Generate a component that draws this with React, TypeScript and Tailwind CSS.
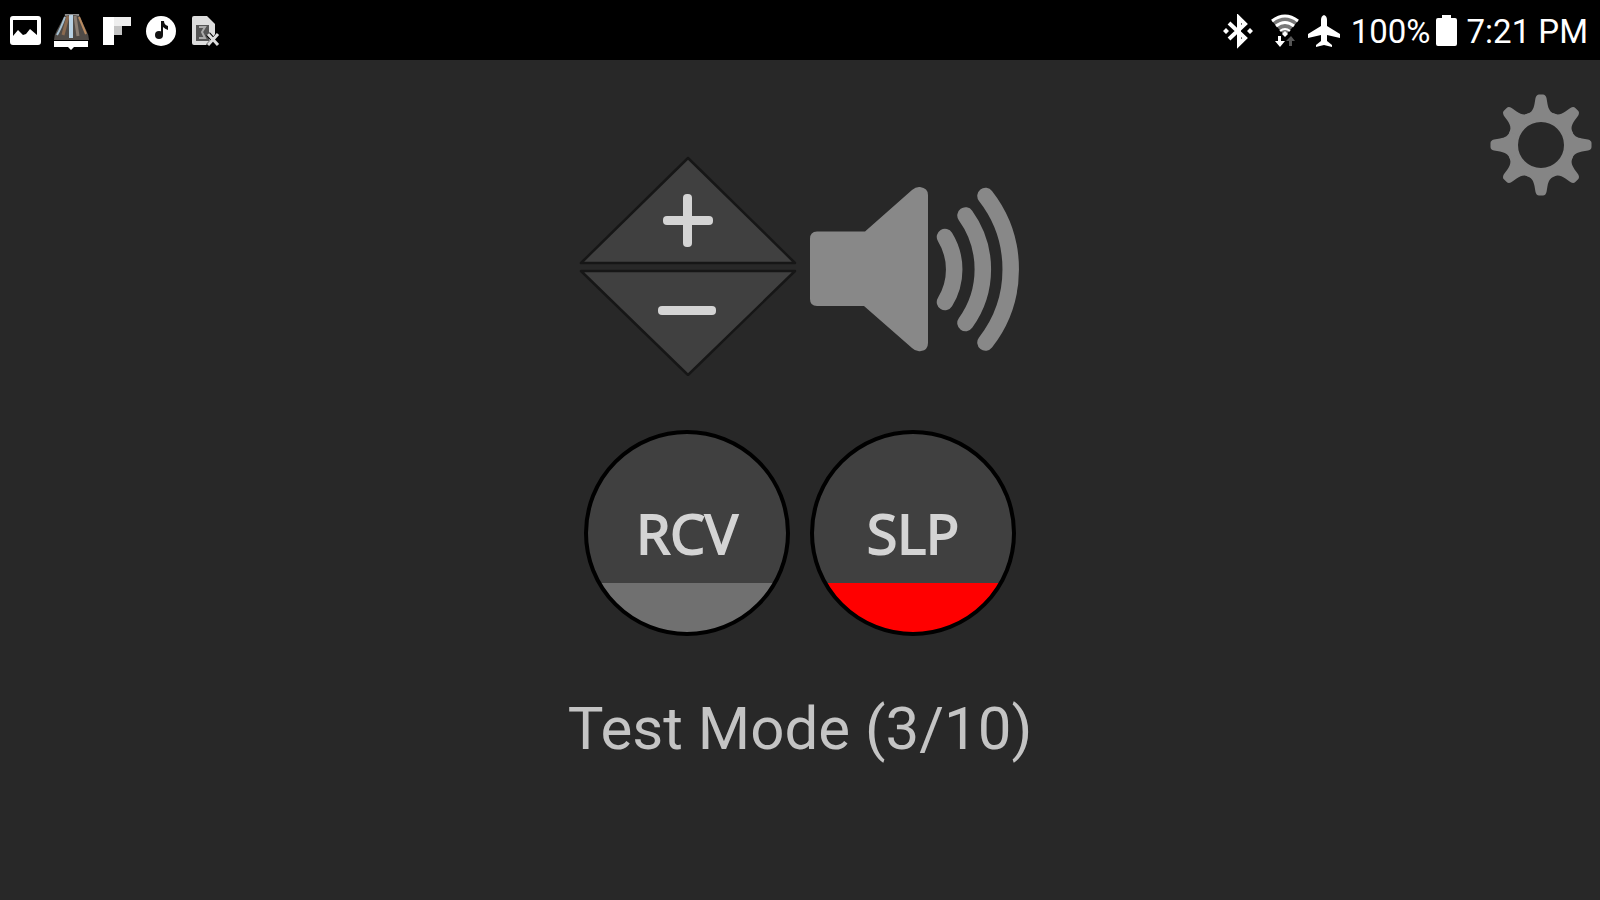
import type { ReactNode } from "react";

const TEETH = [0, 45, 90, 135, 180, 225, 270, 315];

function PictureIcon() {
  return (
    <svg className="w-8 h-9" viewBox="0 0 32 36" fill="#fff">
      <path
        fillRule="evenodd"
        d="M4 2h25a3 3 0 0 1 3 3v23a3 3 0 0 1-3 3H4a3 3 0 0 1-3-3V5a3 3 0 0 1 3-3zM4 6v16l5-6 5 5 3-1 4-5 7 6V6z"
      />
    </svg>
  );
}

function LighthouseIcon() {
  return (
    <svg className="w-9 h-9" viewBox="0 0 36 36">
      <path d="M11 1q7-3 14 0l7 15q3 5 3 10H0q0-5 3-10z" fill="#504b47" />
      <path d="M11 3Q7 14 3 21" stroke="#a5bfd0" strokeWidth="2" fill="none" />
      <path d="M14 2L9 21" stroke="#8a6a50" strokeWidth="3" />
      <path d="M17 1V24" stroke="#b9d2e4" strokeWidth="4" />
      <path d="M21 2L24 22" stroke="#8a7d72" strokeWidth="3" />
      <path d="M25 3L32 20" stroke="#b88a60" strokeWidth="2" />
      <path d="M11 1q7-2 14 0" stroke="#8f8f8f" strokeWidth="2" fill="none" />
      <path d="M0 27h34v6H20l-3 3-3-3H0z" fill="#fff" />
    </svg>
  );
}

function FlipboardIcon() {
  return (
    <svg className="w-[30px] h-9" viewBox="0 0 30 36">
      <path d="M0 3h11v28H0z" fill="#fff" />
      <path d="M11 3h17v9H11z" fill="#eee" />
      <path d="M11 12h8v9h-8z" fill="#c4c4c4" />
    </svg>
  );
}

function MusicIcon() {
  return (
    <svg className="w-8 h-9" viewBox="0 0 32 36">
      <circle cx="15" cy="17" r="15" fill="#fff" />
      <circle cx="13" cy="21" r="4" fill="#111" />
      <path d="M15 7h3q0 4 4 5v4q-3-1-5-3v8h-2z" fill="#111" />
    </svg>
  );
}

function FileErrorIcon() {
  return (
    <svg className="w-[30px] h-9" viewBox="0 0 30 36">
      <path d="M3 2h13l8 8v10l-5 11H3q-2 0-2-2V4q0-2 2-2z" fill="#ddd" />
      <path d="M5 11h13v16H5z" fill="#555" />
      <path d="M8 13h6l-3 5 3 6H8" fill="none" stroke="#aaa" strokeWidth="2" />
      <path d="M17 20l11 12M28 20L17 32" stroke="#000" strokeWidth="5" />
      <path d="M17 20l10 11M27 20L17 31" stroke="#ddd" strokeWidth="3" />
    </svg>
  );
}

function BluetoothIcon() {
  return (
    <svg className="w-8 h-9" viewBox="0 0 32 36" fill="none" stroke="#fff" strokeWidth="4">
      <path d="M6 9l16 15-6 6V4l6 6L6 25" />
      <path d="M0 17l3-3 3 3-3 3zM24 17l3-3 3 3-3 3z" fill="#fff" stroke="none" />
    </svg>
  );
}

function WifiIcon() {
  return (
    <svg className="w-7 h-9" viewBox="0 0 28 36" fill="none">
      <path d="M1 7q13-12 26 0L14 22z" fill="#777" />
      <path d="M1 7q13-10 26 0" stroke="#fff" strokeWidth="3" />
      <path d="M5 12q9-7 18 0" stroke="#fff" strokeWidth="3" />
      <path d="M9 17q5-4 10 0" stroke="#fff" strokeWidth="2" />
      <path d="M14 17l3 3-3 3-3-3z" fill="#fff" />
      <path d="M7 22h3v5h4l-5 6-5-6h3z" fill="#fff" />
      <path d="M18 32v-5h-3l5-5 4 5h-3v5z" fill="#555" />
    </svg>
  );
}

function AirplaneIcon() {
  return (
    <svg className="w-[34px] h-9" viewBox="0 0 34 36" fill="#fff">
      <path d="M17 1q3 1 3 5v6l13 8v4l-13-3v6l5 4v2l-8-2-8 2v-2l5-4v-6L1 24v-4l13-8V6q0-4 3-5z" />
    </svg>
  );
}

function BatteryIcon() {
  return (
    <svg className="w-6 h-9" viewBox="0 0 24 36" fill="#fff">
      <path d="M7 1h9v3h4q2 0 2 2v24q0 2-2 2H3q-2 0-2-2V6q0-2 2-2h4z" />
    </svg>
  );
}

function StatusBar() {
  return (
    <header className="h-[60px] bg-black flex items-center justify-between pt-1 pl-[9px] pr-3 text-white text-[33px] leading-9">
      <div className="flex items-center gap-[13px]">
        <PictureIcon />
        <LighthouseIcon />
        <FlipboardIcon />
        <MusicIcon />
        <FileErrorIcon />
      </div>
      <div className="flex items-center">
        <div className="flex items-center mr-[10px]">
          <BluetoothIcon />
          <span className="ml-4 mr-2">
            <WifiIcon />
          </span>
          <AirplaneIcon />
        </div>
        <span>100%</span>
        <span className="ml-1 mr-2">
          <BatteryIcon />
        </span>
        <time>7:21 PM</time>
      </div>
    </header>
  );
}

function GearIcon() {
  return (
    <svg className="w-[102px] h-[102px]" viewBox="-51 -51 102 102" fill="#858585">
      <circle r="28.500" fill="none" stroke="#858585" strokeWidth="11" />
      {TEETH.map((a) => (
        <path
          key={a}
          transform={`rotate(${a})`}
          d="M-13-31.4C-9-33-7.500-36-6.500-41L-5.500-47Q-4.500-50.500-2-50.500H2Q4.500-50.500 5.500-47L6.500-41C7.500-36 9-33 13-31.400L10-24H-10Z"
        />
      ))}
    </svg>
  );
}

function VolumeButtons() {
  return (
    <div className="flex flex-col">
      <button aria-label="Volume up">
        <svg className="w-[220px] h-[110px]" viewBox="0 0 220 110">
          <path d="M110 2L3 107H217Z" fill="#404040" stroke="#161616" strokeWidth="2.500" strokeLinejoin="round" />
          <rect x="85" y="60" width="50" height="9" rx="4" fill="#d4d4d4" />
          <rect x="105" y="38" width="9" height="53" rx="4" fill="#d4d4d4" />
        </svg>
      </button>
      <button aria-label="Volume down">
        <svg className="w-[220px] h-[110px]" viewBox="0 0 220 110">
          <path d="M110 109L3 5H217Z" fill="#404040" stroke="#161616" strokeWidth="2.500" strokeLinejoin="round" />
          <rect x="80" y="40" width="58" height="9" rx="4" fill="#d4d4d4" />
        </svg>
      </button>
    </div>
  );
}

function SpeakerIcon() {
  return (
    <svg className="w-[218px] h-[220px]" viewBox="0 0 218 220" fill="none" stroke="#888" strokeWidth="16.500" strokeLinecap="round">
      <path
        d="M13 75.500H61L108 34Q112 30.500 116 31Q124 32 124 39V187Q124 194 117 195Q112 196 108 192L60 150H13Q6 150 6 143V83Q6 75.500 13 75.500Z"
        fill="#888"
        stroke="none"
      />
      <path d="M141 81A62 62 0 0 1 141 146" />
      <path d="M161.500 59.500A92 92 0 0 1 161.500 167" />
      <path d="M181.500 40A119 119 0 0 1 181.500 186.500" />
    </svg>
  );
}

function RoundButton({ on, children }: { on?: boolean; children: ReactNode }) {
  const fill = on
    ? "bg-[linear-gradient(to_top,#ff0000_49px,#404040_49px)]"
    : "bg-[linear-gradient(to_top,#707070_49px,#404040_49px)]";
  return (
    <button
      aria-pressed={!!on}
      className={`size-[206px] rounded-full border-4 border-black text-[55px] text-[#d4d4d4] [-webkit-text-stroke:2px_#d4d4d4] font-['Open_Sans','Noto_Sans',sans-serif] ${fill}`}
    >
      {children}
    </button>
  );
}

export default function App() {
  return (
    <div className="min-h-screen flex flex-col bg-[#282828] font-[Roboto,sans-serif]">
      <StatusBar />
      <main className="flex-1 grid grid-cols-[1fr_auto_1fr] items-start">
        <div className="col-start-2 flex flex-col items-center pt-24">
          <div className="flex gap-[6px]">
            <VolumeButtons />
            <SpeakerIcon />
          </div>
          <div className="flex gap-5 mt-[54px]">
            <RoundButton>RCV</RoundButton>
            <RoundButton on>SLP</RoundButton>
          </div>
          <p className="mt-[57px] text-[60px] leading-[72px] text-[#c4c4c4]">Test Mode (3/10)</p>
        </div>
        <button aria-label="Settings" className="justify-self-end mt-[34px] mr-2">
          <GearIcon />
        </button>
      </main>
    </div>
  );
}
